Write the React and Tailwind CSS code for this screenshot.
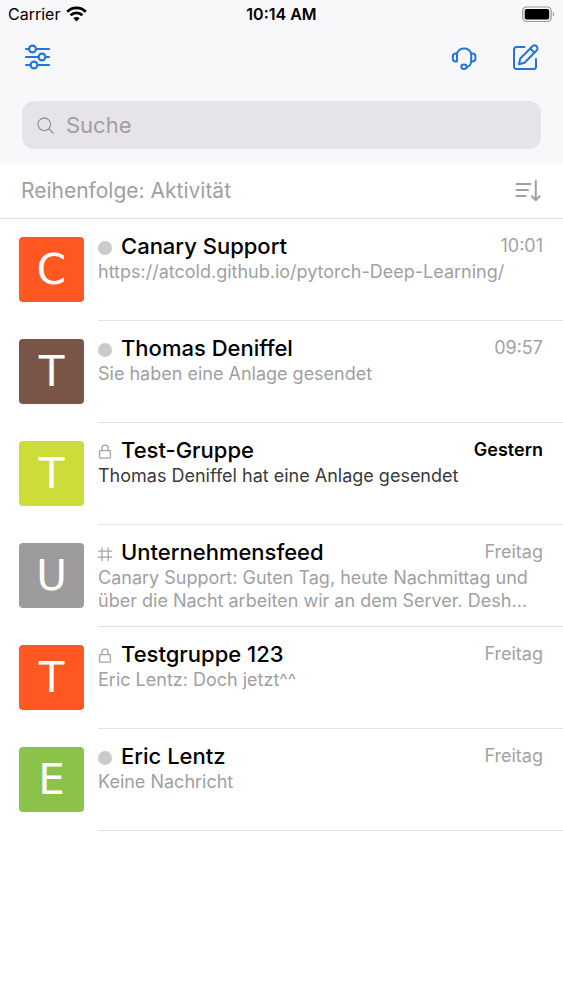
import React, { useState } from "react";

const chats = [
  { id: 1, name: "Canary Support", letter: "C", color: "bg-[#fe5722]", kind: "direct", time: "10:01", text: "https://atcold.github.io/pytorch-Deep-Learning/" },
  { id: 2, name: "Thomas Deniffel", letter: "T", color: "bg-[#795548]", kind: "direct", time: "09:57", text: "Sie haben eine Anlage gesendet" },
  { id: 3, name: "Test-Gruppe", letter: "T", color: "bg-[#cddc39]", kind: "private", time: "Gestern", text: "Thomas Deniffel hat eine Anlage gesendet", unread: true },
  { id: 4, name: "Unternehmensfeed", letter: "U", color: "bg-[#9e9b9e]", kind: "feed", time: "Freitag", text: "Canary Support: Guten Tag, heute Nachmittag und über die Nacht arbeiten wir an dem Server. Desh…" },
  { id: 5, name: "Testgruppe 123", letter: "T", color: "bg-[#fe5722]", kind: "private", time: "Freitag", text: "Eric Lentz: Doch jetzt^^" },
  { id: 6, name: "Eric Lentz", letter: "E", color: "bg-[#8bc34a]", kind: "direct", time: "Freitag", text: "Keine Nachricht" },
];

function StatusBar() {
  return (
    <div className="grid grid-cols-3 items-center h-7 px-2 text-base text-black">
      <div className="flex items-center gap-[6px]">
        <span>Carrier</span>
        <svg width="21" height="16" viewBox="0 0 21 16" fill="none" stroke="currentColor" strokeWidth="2.8">
          <path d="M1.2 5.7a13.2 13.2 0 0 1 18.6 0" />
          <path d="M4.6 9.3a8.4 8.4 0 0 1 11.8 0" />
          <path d="M10.5 15.4 7.4 12.2a4.4 4.4 0 0 1 6.2 0z" fill="currentColor" stroke="none" />
        </svg>
      </div>
      <span className="text-center font-semibold">10:14 AM</span>
      <svg className="justify-self-end" width="34" height="17" viewBox="0 0 34 17">
        <rect x="1.700" y="1" width="28.500" height="14.500" rx="4" fill="none" stroke="#98979b" strokeWidth="1.200" />
        <rect x="3.700" y="3" width="24.500" height="10.500" rx="2" fill="#000" />
        <path d="M31.900 6v4.600c1.700-.7 1.700-3.900 0-4.600z" fill="#98979b" />
      </svg>
    </div>
  );
}

function FilterIcon() {
  return (
    <svg width="26" height="26" viewBox="0 0 26 26" fill="none" stroke="currentColor" strokeWidth="2.100" strokeLinecap="round">
      <path d="M2 5h3M12 5h13M2 13h12.500M21.500 13H25M2 21h4.500M13.500 21H25" />
      <circle cx="8.500" cy="5" r="3.400" />
      <circle cx="18" cy="13" r="3.400" />
      <circle cx="10" cy="21" r="3.400" />
    </svg>
  );
}

function HeadsetIcon() {
  return (
    <svg width="26" height="26" viewBox="0 0 26 26" fill="none" stroke="currentColor" strokeWidth="2" strokeLinecap="round" strokeLinejoin="round">
      <path d="M6 9.500a7.500 7.500 0 0 1 14.200 0" />
      <path d="M6 9.500v8H4.800a3 3 0 0 1-3-3v-2a3 3 0 0 1 3-3z" />
      <path d="M20.200 9.500v8h1.200a3 3 0 0 0 3-3v-2a3 3 0 0 0-3-3z" />
      <path d="M20.200 17.500c-.4 3.200-2.100 5.200-4.600 5.500" />
      <ellipse cx="13" cy="22.700" rx="2.700" ry="2.300" />
    </svg>
  );
}

function ComposeIcon() {
  return (
    <svg width="26" height="26" viewBox="0 0 26 26" fill="none" stroke="currentColor" strokeWidth="2" strokeLinecap="round" strokeLinejoin="round">
      <path d="M11.500 3h-8A2.500 2.500 0 0 0 1 5.500v17A2.500 2.500 0 0 0 3.500 25h17a2.500 2.500 0 0 0 2.500-2.500V15" />
      <path d="M6 20.200l1.300-5.700L19.400 2.300a2.900 2.900 0 0 1 4.200 4.200L11.500 18.700z" />
      <path d="M17.200 4.500l4.200 4.200" />
    </svg>
  );
}

function KindIcon({ kind }) {
  if (kind === "private") {
    return (
      <svg className="text-[#a3a2a5]" width="14" height="16" viewBox="0 0 14 16" fill="none" stroke="currentColor" strokeWidth="1.300">
        <rect x="1.600" y="6.600" width="10.800" height="7.600" rx="0.800" />
        <path d="M3.900 6.600V4.300a3.100 3.100 0 0 1 6.200 0v2.300" />
      </svg>
    );
  }
  if (kind === "feed") {
    return (
      <svg className="text-[#a3a2a5]" width="14" height="16" viewBox="0 0 14 16" fill="none" stroke="currentColor" strokeWidth="1.200">
        <path d="M0 5.200h14M0 11.200h14M4 1.500v13.500M10.200 1.500v13.500" />
      </svg>
    );
  }
  return <span className="size-[14px] rounded-full bg-[#cbcacc]" />;
}

function ChatRow({ chat }) {
  return (
    <li>
      <a href={`#chat-${chat.id}`} className="flex gap-[14px] pl-[19px]">
        <span className={`mt-[18px] flex size-[65px] shrink-0 items-center justify-center rounded font-['DejaVu_Sans',sans-serif] text-[42px] text-white ${chat.color}`}>
          {chat.letter}
        </span>
        <div className="min-w-0 grow min-h-[102px] border-b border-[#e2e1e3] pt-[14px] pr-5">
          <div className="flex items-center leading-[26px]">
            <span className="mr-[9px] flex shrink-0 pt-1">
              <KindIcon kind={chat.kind} />
            </span>
            <h2 className="truncate text-[22px] font-medium text-black">{chat.name}</h2>
            <span className={`ml-auto pl-2 text-[18px] ${chat.unread ? "font-semibold text-black" : "text-[#a3a2a5]"}`}>
              {chat.time}
            </span>
          </div>
          <p className={`mt-px line-clamp-2 text-[18px] leading-[23px] ${chat.unread ? "text-[#3a3a3c]" : "text-[#a09fa2]"}`}>
            {chat.text}
          </p>
        </div>
      </a>
    </li>
  );
}

function App() {
  const [search, setSearch] = useState("");

  return (
    <div className="min-h-screen bg-white font-['Inter',sans-serif]">
      <header className="bg-[#f8f7fa] pb-[15px]">
        <StatusBar />

        <nav className="flex items-center px-6 pt-4 text-[#2474dc]">
          <button type="button" aria-label="Filter">
            <FilterIcon />
          </button>
          <button type="button" aria-label="Support" className="ml-auto">
            <HeadsetIcon />
          </button>
          <button type="button" aria-label="Neue Nachricht" className="ml-9">
            <ComposeIcon />
          </button>
        </nav>

        {/* SEARCH */}
        <label className="mx-[22px] mt-[31px] flex h-12 items-center gap-3 rounded-xl bg-[#e6e4e8] px-[15px] text-[#98979b]">
          <svg width="17" height="17" viewBox="0 0 17 17" fill="none" stroke="currentColor" strokeWidth="1.300" strokeLinecap="round">
            <circle cx="7.300" cy="7.300" r="6.300" />
            <path d="M12 12l4 4" />
          </svg>
          <input
            type="text"
            aria-label="Suche"
            placeholder="Suche"
            value={search}
            onChange={(e) => setSearch(e.target.value)}
            className="min-w-0 grow bg-transparent text-[22px] text-black placeholder-[#a09fa2] focus:outline-none"
          />
        </label>
      </header>

      <main>
        <button
          type="button"
          className="flex h-[55px] w-full items-center justify-between border-b border-[#e2e1e3] pl-[21px] pr-[22px] text-[21px] text-[#a09fa2]"
        >
          <span>Reihenfolge: Aktivität</span>
          <svg width="26" height="22" viewBox="0 0 26 22" fill="none" stroke="currentColor" strokeWidth="2" strokeLinecap="round" strokeLinejoin="round">
            <path d="M1.500 4h14M1.500 10h11.500M1.500 16h9" />
            <path d="M20.800 1v19M17 16.300l3.800 3.900 3.800-3.900" />
          </svg>
        </button>

        <ul>
          {chats.map((chat) => (
            <ChatRow key={chat.id} chat={chat} />
          ))}
        </ul>
      </main>
    </div>
  );
}

export default App;
